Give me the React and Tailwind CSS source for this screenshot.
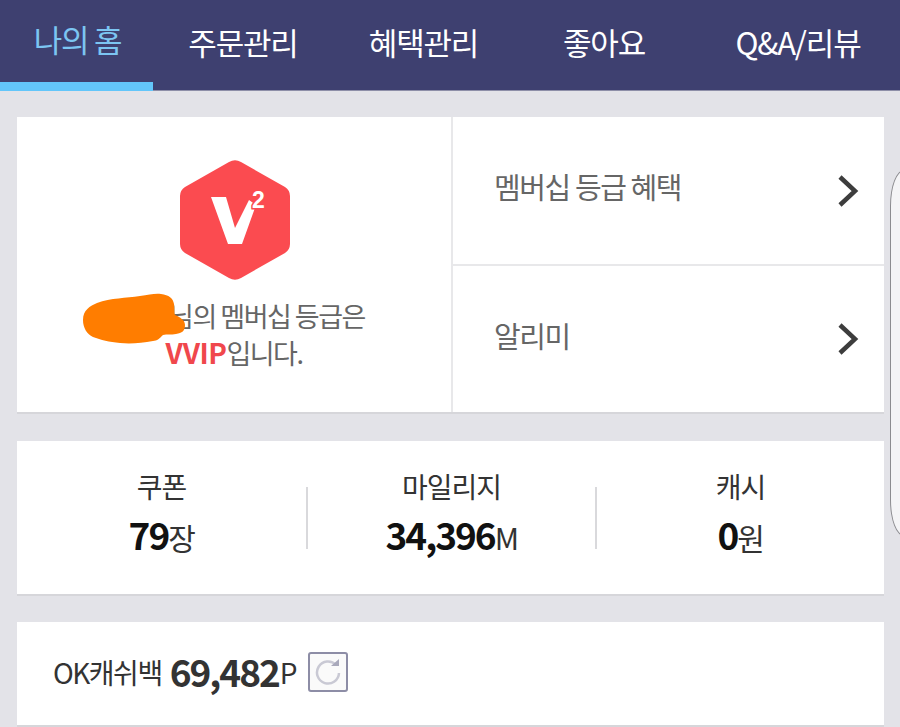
import React from 'react';

const FONT = '[font-family:"Noto_Sans_CJK_KR","Noto_Sans",sans-serif]';

const tabs = [
  { label: '나의 홈', width: 'w-[153px] pl-[2px]', active: true },
  { label: '주문관리', width: 'w-[180px]' },
  { label: '혜택관리', width: 'w-[181px]' },
  { label: '좋아요', width: 'w-[180px]' },
  { label: 'Q&A/리뷰', width: 'w-[206px] pl-[2px]' },
];

function Chevron() {
  return (
    <svg className="w-[22px] h-[34px]" viewBox="0 0 22 34" fill="none" stroke="#3d3d3d" strokeWidth="4.5">
      <path d="M3 3l15 14L3 31" />
    </svg>
  );
}

function GradeBadge() {
  return (
    <svg className="w-[112px] h-[122px]" viewBox="0 0 112 122">
      <path d="M51 2a12 12 0 0 1 12 0l44 25a11 11 0 0 1 5 9v48a11 11 0 0 1-5 9l-44 25a12 12 0 0 1-12 0L7 93a11 11 0 0 1-5-9V36a11 11 0 0 1 5-9z" fill="#fb4b50" />
      <path d="M33 37h15l9 31 14-28 7 5-14 39H50z" fill="#fff" />
      <text
        x="74"
        y="48"
        fontSize="23"
        fontWeight="700"
        fill="#fff"
        stroke="#fb4b50"
        strokeWidth="3"
        paintOrder="stroke"
        fontFamily="Liberation Sans, sans-serif"
      >
        2
      </text>
    </svg>
  );
}

function Stat({ label, value, unit, width }) {
  return (
    <div className={`${width} flex flex-col items-center pb-[4px]`}>
      <span className="text-[28px] leading-[40px] tracking-[-1px] text-[#333]">{label}</span>
      <span className="mt-[6px] leading-[44px] text-[#111]">
        <span className="text-[37px] font-bold tracking-[-2px]">{value}</span>
        <span className="text-[30px] tracking-[-1.5px] text-[#333]">{unit}</span>
      </span>
    </div>
  );
}

export default function App() {
  return (
    <div className={`relative w-[900px] h-[727px] overflow-hidden bg-[#e3e3e8] ${FONT}`}>
      {/* top tabs */}
      <nav className="flex h-[91px] bg-[#3e4070] border-b border-[#8e8fa8]">
        {tabs.map((tab) => (
          <div
            key={tab.label}
            className={`${tab.width} flex items-center justify-center pb-[6px] text-[31px] tracking-[-1.2px] ${
              tab.active ? 'text-[#7cc5f2] h-[91px] border-b-[9px] border-[#63c6fa] pt-[3px]' : 'text-white'
            }`}
          >
            {tab.label}
          </div>
        ))}
      </nav>

      <div className="ml-[17px] w-[867px] pt-[26px] flex flex-col">
        {/* membership card */}
        <section className="flex h-[297px] bg-white border-b-2 border-[#d6d6da]">
          <div className="w-[434px] flex flex-col items-center pt-[43px]">
            <GradeBadge />
            <p className="mt-[15px] text-[27px] leading-[37px] tracking-[-1.5px] text-[#666] text-center">
              <span className="inline-block w-[66px]" />
              님의 멤버십 등급은
              <br />
              <span className="text-[28px] font-bold tracking-[-0.5px] text-[#f0474c]">VVIP</span>입니다.
            </p>
          </div>
          <div className="flex-1 flex flex-col border-l-2 border-[#e8e8ea]">
            <div className="h-[149px] flex items-center justify-between pl-[41px] pr-[25px] border-b-2 border-[#e8e8ea]">
              <span className="text-[29px] tracking-[-1.4px] text-[#666] mb-[8px]">멤버십 등급 혜택</span>
              <Chevron />
            </div>
            <div className="flex-1 flex items-center justify-between pl-[41px] pr-[25px]">
              <span className="text-[29px] tracking-[-1.4px] text-[#666] mb-[6px]">알리미</span>
              <Chevron />
            </div>
          </div>
        </section>

        {/* coupon, mileage, cash */}
        <section className="mt-[27px] h-[155px] flex items-center bg-white border-b-2 border-[#d6d6da]">
          <Stat label="쿠폰" value="79" unit="장" width="w-[289px]" />
          <div className="w-[2px] h-[62px] bg-[#d9d9dc]" />
          <Stat label="마일리지" value="34,396" unit="M" width="w-[287px]" />
          <div className="w-[2px] h-[62px] bg-[#d9d9dc]" />
          <Stat label="캐시" value="0" unit="원" width="flex-1" />
        </section>

        {/* OK cashbag */}
        <section className="mt-[26px] h-[105px] flex items-center pl-[36px] pb-[4px] bg-white border-b-2 border-[#d6d6da]">
          <span className="text-[28px] tracking-[-1.5px] text-[#333]">OK캐쉬백</span>
          <span className="ml-[8px] text-[37px] font-bold tracking-[-2px] text-[#333]">69,482</span>
          <span className="ml-px text-[28px] text-[#333]">P</span>
          <div className="ml-[10px] w-[40px] h-[40px] flex items-center justify-center rounded-[3px] border-2 border-[#8d8da6] bg-[#fafafa]">
            <svg className="w-[28px] h-[28px]" viewBox="0 0 28 28" fill="none" stroke="#c9c9d4" strokeWidth="2.5">
              <path d="M22 7a11 11 0 1 0 3 8" />
              <path d="M17 8h8V1z" fill="#a9a9bb" stroke="none" />
            </svg>
          </div>
        </section>
      </div>

      {/* scribble over the user name */}
      <svg className="absolute left-[81px] top-[293px] w-[106px] h-[54px]" viewBox="0 0 106 54">
        <path
          d="M2 27C2 17 9 13 16 10 30 5 45 5 59 3 68 2 74 0 80 1c8 1 12 4 13 10 1 5 0 9 1 11 5 2 10 5 10 10 0 6-3 8-9 9-5 1-9 0-13 1-3 3-6 6-10 6-11 2-22 3-33 2C28 49 20 47 12 44 6 41 2 35 2 27z"
          fill="#ff7d00"
        />
      </svg>

      {/* panel edge coming in from the right */}
      <div className="absolute left-[890px] top-[170px] w-[30px] h-[366px] rounded-tl-[14px_36px] rounded-bl-[14px_36px] border border-[#8c8c90] bg-[#f4f4f6]" />
    </div>
  );
}
